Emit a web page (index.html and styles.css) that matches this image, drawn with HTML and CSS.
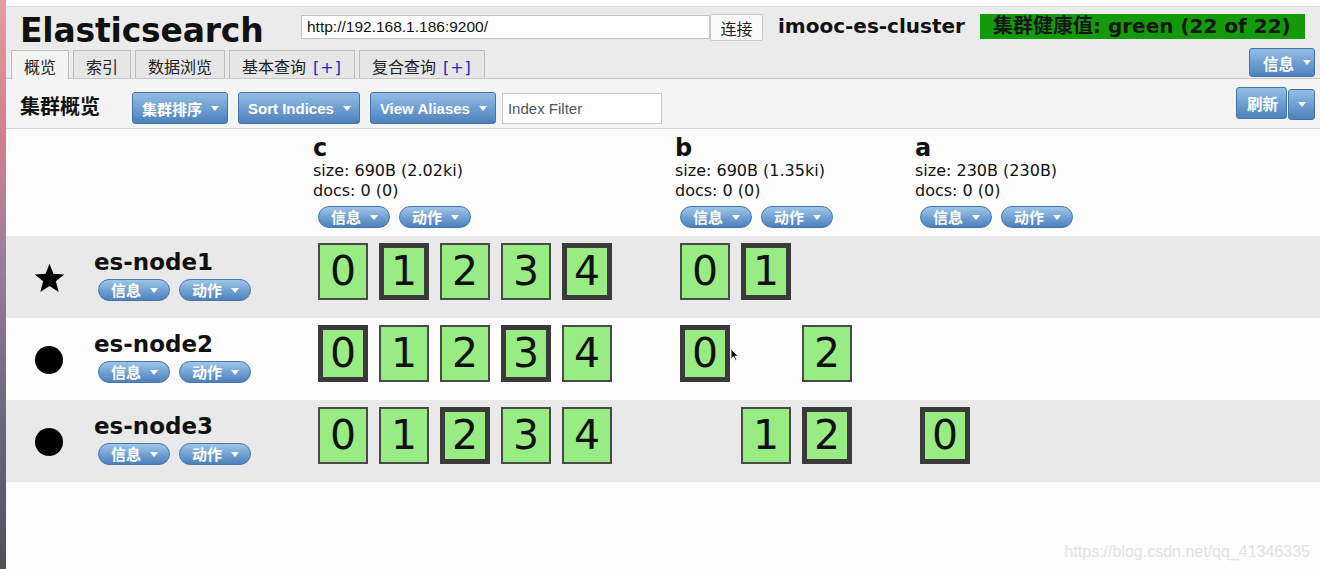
FILE: index.html
```html
<!DOCTYPE html>
<html lang="zh-CN">
<head>
  <meta charset="UTF-8">
  <meta name="viewport" content="width=device-width, initial-scale=1.0">
  <title>Elasticsearch</title>
  <link rel="stylesheet" href="styles.css">
</head>
<body>
  <div class="dock"></div>
  <div class="app">
    <div class="header">
      <div class="header-top">
        <h1 class="brand">Elasticsearch</h1>
        <input class="url" type="text" value="http://192.168.1.186:9200/">
        <button class="connect">连接</button>
        <span class="cluster-name">imooc-es-cluster</span>
        <span class="health">集群健康值: green (22 of 22)</span>
      </div>
      <div class="header-tabs">
        <div class="tabs">
          <span class="tab active">概览</span>
          <span class="tab">索引</span>
          <span class="tab">数据浏览</span>
          <span class="tab">基本查询<span class="plus">[+]</span></span>
          <span class="tab">复合查询<span class="plus">[+]</span></span>
        </div>
        <button class="btn drop info-btn">信息</button>
      </div>
    </div>

    <div class="toolbar">
      <h2>集群概览</h2>
      <div class="actions">
        <button class="btn drop">集群排序</button>
        <button class="btn drop">Sort Indices</button>
        <button class="btn drop">View Aliases</button>
      </div>
      <input class="filter" type="text" placeholder="Index Filter">
      <div class="refresh">
        <button class="btn refresh-main">刷新</button>
        <button class="btn drop refresh-drop"></button>
      </div>
    </div>

    <div class="overview">
      <div class="cols">
        <div></div>
        <div class="index-head">
          <div class="index-name">c</div>
          <div class="index-stat">size: 690B (2.02ki)</div>
          <div class="index-stat">docs: 0 (0)</div>
          <div class="pills"><span class="pill">信息</span><span class="pill">动作</span></div>
        </div>
        <div class="index-head">
          <div class="index-name">b</div>
          <div class="index-stat">size: 690B (1.35ki)</div>
          <div class="index-stat">docs: 0 (0)</div>
          <div class="pills"><span class="pill">信息</span><span class="pill">动作</span></div>
        </div>
        <div class="index-head">
          <div class="index-name">a</div>
          <div class="index-stat">size: 230B (230B)</div>
          <div class="index-stat">docs: 0 (0)</div>
          <div class="pills"><span class="pill">信息</span><span class="pill">动作</span></div>
        </div>
      </div>

      <!-- es-node1 (master) -->
      <div class="cols node-row alt">
        <div class="node">
          <div class="node-icon">
            <svg width="33" height="31" viewBox="0 0 24 23"><polygon points="12,0.6 14.9,8 22.9,8.5 16.7,13.6 18.8,21.6 12,17.1 5.2,21.6 7.3,13.6 1.1,8.5 9.1,8" fill="#000"/></svg>
          </div>
          <div class="node-info">
            <div class="node-name">es-node1</div>
            <div class="pills"><span class="pill">信息</span><span class="pill">动作</span></div>
          </div>
        </div>
        <div class="shards">
          <span class="shard">0</span><span class="shard primary">1</span><span class="shard">2</span><span class="shard">3</span><span class="shard primary">4</span>
        </div>
        <div class="shards">
          <span class="shard">0</span><span class="shard primary">1</span>
        </div>
        <div class="shards"></div>
      </div>

      <!-- es-node2 -->
      <div class="cols node-row">
        <div class="node">
          <div class="node-icon"><span class="dot"></span></div>
          <div class="node-info">
            <div class="node-name">es-node2</div>
            <div class="pills"><span class="pill">信息</span><span class="pill">动作</span></div>
          </div>
        </div>
        <div class="shards">
          <span class="shard primary">0</span><span class="shard">1</span><span class="shard">2</span><span class="shard primary">3</span><span class="shard">4</span>
        </div>
        <div class="shards">
          <span class="shard primary">0</span><span class="shard empty"></span><span class="shard">2</span>
        </div>
        <div class="shards"></div>
      </div>

      <!-- es-node3 -->
      <div class="cols node-row alt">
        <div class="node">
          <div class="node-icon"><span class="dot"></span></div>
          <div class="node-info">
            <div class="node-name">es-node3</div>
            <div class="pills"><span class="pill">信息</span><span class="pill">动作</span></div>
          </div>
        </div>
        <div class="shards">
          <span class="shard">0</span><span class="shard">1</span><span class="shard primary">2</span><span class="shard">3</span><span class="shard">4</span>
        </div>
        <div class="shards">
          <span class="shard empty"></span><span class="shard">1</span><span class="shard primary">2</span>
        </div>
        <div class="shards">
          <span class="shard primary">0</span>
        </div>
      </div>
    </div>

    <svg class="cursor" width="9" height="13" viewBox="0 0 9 13"><path d="M1 1 L1 11 L3.6 8.6 L5.4 12.4 L6.8 11.8 L5.1 8.1 L8.2 8.1 Z" fill="#111" stroke="#fff" stroke-width="0.8"/></svg>
    <div class="watermark">https://blog.csdn.net/qq_41346335</div>
  </div>
</body>
</html>
```

FILE: styles.css
```css
body {
  margin: 0;
  display: flex;
  min-height: 100vh;
  background: #fdfdfd;
  font-family: "DejaVu Sans", "Noto Sans CJK SC", sans-serif;
  color: #111;
  overflow: hidden;
}
.dock {
  flex: none;
  width: 6px;
  background: linear-gradient(#e39ca6, #d5808f 22%, #9c7f99 45%, #6f6b7a 70%, #50505b);
}
.app {
  flex: 1;
  position: relative;
  padding-top: 6px;
  background: #fdfdfd;
}

/* header */
.header {
  background: #ebebeb;
  border-top: 1px solid #dedede;
  border-bottom: 1px solid #c8c8c8;
  padding: 0 5px 0 6px;
}
.header-top {
  display: flex;
  align-items: flex-start;
  height: 41px;
}
.brand {
  margin: 7px 0 0 8px;
  width: 281px;
  font: bold 33px/34px "DejaVu Sans", sans-serif;
  letter-spacing: -0.2px;
}
.url {
  margin-top: 8px;
  width: 409px;
  height: 24px;
  box-sizing: border-box;
  border: 1px solid #c4c4c4;
  padding: 0 5px;
  font: 15.5px "Liberation Sans", sans-serif;
  color: #111;
}
.connect {
  margin-top: 7px;
  width: 53px;
  height: 27px;
  padding: 0;
  border: 1px solid #c9c9c9;
  border-radius: 2px;
  background: #fafafa;
  font: 16px "Noto Sans CJK SC", sans-serif;
  color: #222;
}
.cluster-name {
  margin: 7px 0 0 15px;
  font: bold 20px/24px "DejaVu Sans", sans-serif;
}
.health {
  margin: 7px 0 0 15px;
  height: 25px;
  padding: 0 14px 0 13px;
  background: #139b07;
  color: #161616;
  font: bold 20px/25px "DejaVu Sans", "Noto Sans CJK SC", sans-serif;
}
.header-tabs {
  display: flex;
  justify-content: space-between;
  align-items: flex-end;
  height: 30px;
}
.tabs {
  display: flex;
  gap: 4px;
  margin-left: -1px;
}
.tab {
  height: 28px;
  box-sizing: border-box;
  padding: 2px 12px 0;
  border: 1px solid #bdbdbd;
  border-bottom: none;
  background: #e6e6e6;
  color: #222;
  font: 16px/26px "Noto Sans CJK SC", sans-serif;
}
.tab.active {
  height: 29px;
  margin-bottom: -1px;
  background: #f4f4f4;
}
.plus {
  margin-left: 7px;
  font-family: "DejaVu Sans", sans-serif;
  letter-spacing: 1px;
  color: #2323c4;
}

/* blue buttons */
.btn {
  display: inline-flex;
  align-items: center;
  height: 32px;
  padding: 0 8px 0 9px;
  border: 1px solid #4573a9;
  border-radius: 3px;
  background: linear-gradient(#93bde4, #6c9cd0 55%, #4e82bb);
  color: #fff;
  font: bold 15px "Liberation Sans", "Noto Sans CJK SC", sans-serif;
  box-sizing: border-box;
}
.btn.drop::after,
.pill::after {
  content: "";
  margin-left: 9px;
  border-left: 4.5px solid transparent;
  border-right: 4.5px solid transparent;
  border-top: 5px solid #fff;
}
.info-btn {
  align-self: flex-start;
  height: 29px;
  width: 66px;
  padding: 0 0 0 13px;
  font-size: 15.5px;
}

/* toolbar */
.toolbar {
  display: flex;
  align-items: flex-start;
  height: 50px;
  box-sizing: border-box;
  padding: 13px 5px 0 14px;
  background: #f4f4f4;
  border-bottom: 1px solid #d6d6d6;
}
.toolbar h2 {
  margin: 0 32px 0 0;
  font: bold 20px/28px "Noto Sans CJK SC", sans-serif;
}
.actions {
  display: flex;
  gap: 10px;
}
.filter {
  margin: 1px 0 0 6px;
  width: 160px;
  height: 31px;
  box-sizing: border-box;
  border: 1px solid #cacaca;
  padding: 0 5px;
  font: 15px "Liberation Sans", sans-serif;
}
.filter::placeholder {
  color: #555;
}
.refresh {
  display: flex;
  gap: 1px;
  margin: -5px 0 0 auto;
}
.refresh-main {
  width: 51px;
  padding: 0 0 0 10px;
  font-size: 15.5px;
}
.refresh-drop {
  width: 27px;
  height: 31px;
  margin-top: 2px;
  padding: 0;
}
.refresh-drop::after {
  margin-left: 8px;
}

/* overview table */
.cols {
  display: grid;
  grid-template-columns: 307px 362px 240px 190px;
}
.index-head {
  padding: 6px 0 8px;
}
.index-name {
  font: bold 24px/26px "DejaVu Sans", sans-serif;
}
.index-stat {
  font-size: 16px;
  line-height: 20px;
}
.pills {
  display: flex;
  gap: 9px;
  margin: 5px 0 0 5px;
}
.pill {
  display: inline-flex;
  align-items: center;
  height: 22px;
  box-sizing: border-box;
  padding: 0 11px 0 12px;
  border: 1px solid #4676ad;
  border-radius: 11px;
  background: linear-gradient(#a0c5e8, #6e9fd1 55%, #4d81ba);
  color: #fff;
  font: bold 15px/20px "Noto Sans CJK SC", sans-serif;
}
.node-row {
  height: 82px;
}
.node-row.alt {
  background: #e9e9e9;
}
.node {
  display: flex;
  padding-left: 28px;
}
.node-icon {
  width: 30px;
  height: 34px;
  margin-top: 25px;
  display: flex;
  align-items: center;
  justify-content: center;
}
.dot {
  flex: none;
  width: 28px;
  height: 28px;
  border-radius: 50%;
  background: #000;
}
.node-icon svg {
  flex: none;
}
.node-info {
  margin-left: 30px;
}
.node-name {
  margin-top: 13px;
  font: bold 23px/26px "DejaVu Sans", sans-serif;
}
.node-info .pills {
  margin: 4px 0 0 4px;
}
.shards {
  display: flex;
  gap: 11px;
  padding: 7px 0 0 5px;
}
.shard {
  width: 50px;
  height: 57px;
  box-sizing: border-box;
  border: 2px solid #4a4a4a;
  background: #99ec84;
  display: flex;
  align-items: center;
  justify-content: center;
  font: 41px/1 "DejaVu Sans", sans-serif;
  color: #111;
}
.shard.primary {
  border-width: 5px;
  border-color: #3a3a3a;
}
.shard.empty {
  visibility: hidden;
}

.cursor {
  position: absolute;
  left: 724px;
  top: 348px;
}
.watermark {
  position: absolute;
  right: 10px;
  bottom: 8px;
  font: 16px "Liberation Sans", sans-serif;
  color: #e2e2e2;
}
```
